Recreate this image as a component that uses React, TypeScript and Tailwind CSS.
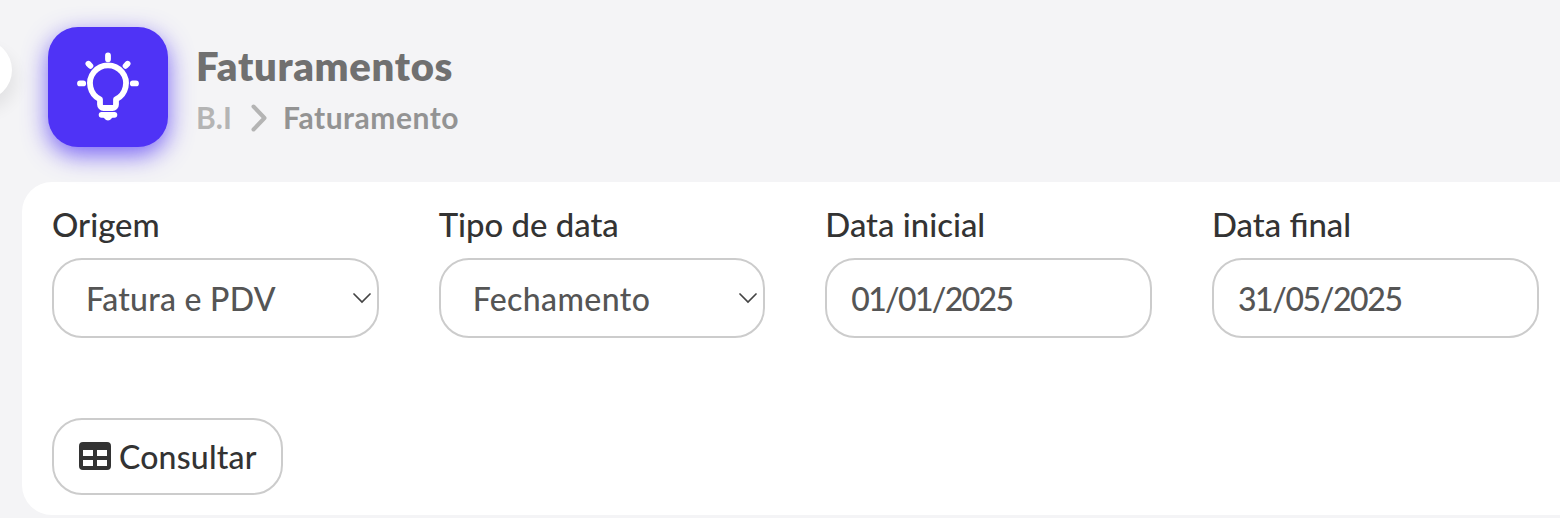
import React from 'react';

interface FieldProps {
  label: string;
  value: string;
  valueClass: string;
  select?: boolean;
}

const BulbIcon: React.FC = () => (
  <svg width="64" height="72" viewBox="76 51 64 72" fill="none" stroke="#fff" strokeWidth="5.8" strokeLinecap="round">
    <path d="M100 99.4A18 18 0 1 1 116 99.4V104.5a3.5 3.5 0 0 1-3.5 3.5h-9a3.5 3.5 0 0 1-3.5-3.5z" strokeLinejoin="round" />
    <path d="M108 55.4v3.8M80 83.4h3.2M132.8 83.4h3.2M88.4 63.7l2 2.2M127.6 63.7l-2 2.2M101.6 114.8h12.8" />
    <path d="M105.4 117.3q2.6 3.4 5.2 0z" strokeWidth="3" fill="#fff" />
  </svg>
);

const TableIcon: React.FC = () => (
  <svg width="32" height="28" viewBox="0 0 32 28" className="-mt-px shrink-0">
    <path
      fillRule="evenodd"
      fill="#333"
      d="M4 0h24a4 4 0 0 1 4 4v20a4 4 0 0 1-4 4H4a4 4 0 0 1-4-4V4a4 4 0 0 1 4-4zM4 8v6h10V8zM18 8v6h10V8zM4 18v6h10v-6zM18 18v6h10v-6z"
    />
  </svg>
);

const Field: React.FC<FieldProps> = ({ label, value, valueClass, select }) => (
  <div className="min-w-0">
    <div className="h-10 text-[32.9px] leading-10 text-[#333]">{label}</div>
    <div
      className={`mt-[13px] flex h-20 items-center justify-between rounded-[30px] border-2 border-[#ccc] text-[32px] text-[#555] ${
        select ? 'pl-8 pr-[6px]' : 'px-6'
      }`}
    >
      <span className={`pt-0.5 ${valueClass}`}>{value}</span>
      {select && (
        <svg width="18" height="11" viewBox="0 0 18 11" fill="none" stroke="#444" strokeWidth="1.7">
          <path d="M1 1l8 8 8-8" strokeLinecap="round" />
        </svg>
      )}
    </div>
  </div>
);

export default function App() {
  return (
    <div className="relative h-[518px] overflow-hidden bg-[#f4f4f6] font-['Lato','Liberation_Sans',sans-serif] font-medium whitespace-nowrap">
      {/* Sidebar toggle */}
      <div className="absolute -left-12 top-10 size-[60px] rounded-full bg-white shadow-[4px_10px_16px_rgba(0,0,0,0.07)]" />

      {/* Page header */}
      <header className="flex h-[182px] gap-7 pl-12 pt-[27px]">
        <div className="flex size-[120px] items-center justify-center rounded-[30px] bg-[#4f33f6] shadow-[0_8px_24px_rgba(79,51,246,0.75)]">
          <BulbIcon />
        </div>
        <div className="pt-[14px]">
          <h1 className="h-[50px] text-[40px] font-extrabold leading-[50px] tracking-[0.7px] text-[#707070]">Faturamentos</h1>
          <div className="mt-[7px] flex h-10 items-center text-[30px] font-bold">
            <span className="w-[35px] pb-0.5 text-[#b4b4b4]">B.I</span>
            <svg className="ml-5 mr-4" width="16" height="28" viewBox="0 0 16 28" fill="none" stroke="#b4b4b4" strokeWidth="4">
              <path d="M2.5 2.5L13.5 14L2.5 25.5" strokeLinecap="round" strokeLinejoin="round" />
            </svg>
            <span className="pb-0.5 tracking-[0.5px] text-[#939393]">Faturamento</span>
          </div>
        </div>
      </header>

      {/* Filters */}
      <main className="ml-[22px] h-[333px] rounded-l-[30px] bg-white pl-[30px] pr-[21.4px] pt-[23px]">
        <div className="grid grid-cols-4 gap-x-[60px]">
          <Field label="Origem" value="Fatura e PDV" valueClass="tracking-[0.27px]" select />
          <Field label="Tipo de data" value="Fechamento" valueClass="tracking-[0.4px]" select />
          <Field label="Data inicial" value="01/01/2025" valueClass="tracking-[-1.65px]" />
          <Field label="Data final" value="31/05/2025" valueClass="tracking-[-1.4px]" />
        </div>
        <button className="mt-20 flex h-[77px] w-[231px] items-center gap-2 rounded-[30px] border-2 border-[#ccc] pl-[25px] text-[32px] text-[#333]">
          <TableIcon />
          <span className="tracking-[0.2px]">Consultar</span>
        </button>
      </main>
    </div>
  );
}
